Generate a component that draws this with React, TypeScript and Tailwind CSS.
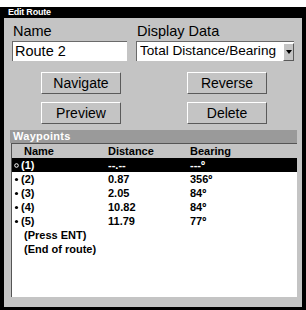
import React from 'react';

const rows = [
    { name: '(1)', dist: '--.--', bear: '---º', sel: true },
    { name: '(2)', dist: '0.87', bear: '356º' },
    { name: '(3)', dist: '2.05', bear: '84º' },
    { name: '(4)', dist: '10.82', bear: '84º' },
    { name: '(5)', dist: '11.79', bear: '77º' },
];

function Btn({ label }: { label: string }) {
    return (
        <div className="w-[80px] h-[22px] flex items-center justify-center bg-[#c4c4c4] border border-t-white border-l-white border-r-[#5a5a5a] border-b-[#5a5a5a] text-[14px] text-black leading-none">
            {label}
        </div>
    );
}

export default function App() {
    return (
        <div className="w-[306px] h-[310px] bg-white pt-[7px] font-['Liberation_Sans',Arial,sans-serif]">
            <div className="w-[306px] h-[303px] bg-black px-[4px] pb-[3px] flex flex-col">
                <div className="h-[11px] flex items-center pl-[4px] text-white text-[9px] font-bold tracking-tight leading-none">
                    Edit Route
                </div>
                <div className="flex-1 bg-[#c4c4c4] flex flex-col pl-[8px] pr-[8px] pt-[4px]">
                    <div className="flex gap-[9px]">
                        <div className="w-[115px] shrink-0 flex flex-col">
                            <div className="text-[14.5px] leading-[18px] text-black pl-[1px]">Name</div>
                            <div className="h-[20px] mt-[1px] bg-white border-t border-l border-t-[#6a6a6a] border-l-[#6a6a6a] flex items-center pl-[2px] text-[14.5px] text-black">
                                Route 2
                            </div>
                        </div>
                        <div className="flex-1 min-w-0 flex flex-col">
                            <div className="text-[14.5px] leading-[18px] text-black pl-[1px]">Display Data</div>
                            <div className="h-[20px] mt-[1px] bg-white border-t border-l border-t-[#6a6a6a] border-l-[#6a6a6a] flex items-center pl-[3px] text-[13.6px] text-black">
                                <span className="flex-1 min-w-0 overflow-hidden whitespace-nowrap">Total Distance/Bearing</span>
                                <div className="w-[11px] h-[18px] shrink-0 bg-[#c4c4c4] border border-t-white border-l-white border-r-[#5a5a5a] border-b-[#5a5a5a] flex items-center justify-center">
                                    <svg width="6" height="4" viewBox="0 0 6 4">
                                        <polygon points="0,0 6,0 3,4" fill="#000" />
                                    </svg>
                                </div>
                            </div>
                        </div>
                    </div>
                    <div className="flex flex-col gap-[8px] mt-[11px] pl-[29px]">
                        <div className="flex gap-[66px]">
                            <Btn label="Navigate" />
                            <Btn label="Reverse" />
                        </div>
                        <div className="flex gap-[66px]">
                            <Btn label="Preview" />
                            <Btn label="Delete" />
                        </div>
                    </div>
                    <div className="mt-[6px] -ml-[2px] -mr-[3px] h-[13px] bg-[#9a9a9a] pl-[3px] flex items-center text-white text-[11px] font-bold tracking-wide leading-none">
                        Waypoints
                    </div>
                    <div className="h-[154px] -ml-[1px] -mr-[3px] bg-white border-t border-l border-t-[#555] border-l-[#555] text-[11px] font-bold leading-none text-black">
                        <div className="h-[14px] bg-[#c4c4c4] flex items-center">
                            <span className="w-[96px] pl-[12px]">Name</span>
                            <span className="w-[82px]">Distance</span>
                            <span>Bearing</span>
                        </div>
                        {rows.map((r) => (
                            <div key={r.name} className={`h-[14px] flex items-center ${r.sel ? 'bg-black text-white' : ''}`}>
                                <span className="w-[96px] pl-[2px] flex items-center">
                                    <svg width="5" height="5" viewBox="0 0 5 5" className="mr-[2px]">
                                        {r.sel ? (
                                            <circle cx="2.5" cy="2.5" r="1.8" fill="none" stroke="#fff" strokeWidth="1" />
                                        ) : (
                                            <circle cx="2.5" cy="2.5" r="1.6" fill="#000" />
                                        )}
                                    </svg>
                                    <span>{r.name}</span>
                                </span>
                                <span className="w-[82px]">{r.dist}</span>
                                <span>{r.bear}</span>
                            </div>
                        ))}
                        <div className="h-[14px] flex items-center pl-[12px]">(Press ENT)</div>
                        <div className="h-[14px] flex items-center pl-[12px]">(End of route)</div>
                    </div>
                </div>
            </div>
        </div>
    );
}
